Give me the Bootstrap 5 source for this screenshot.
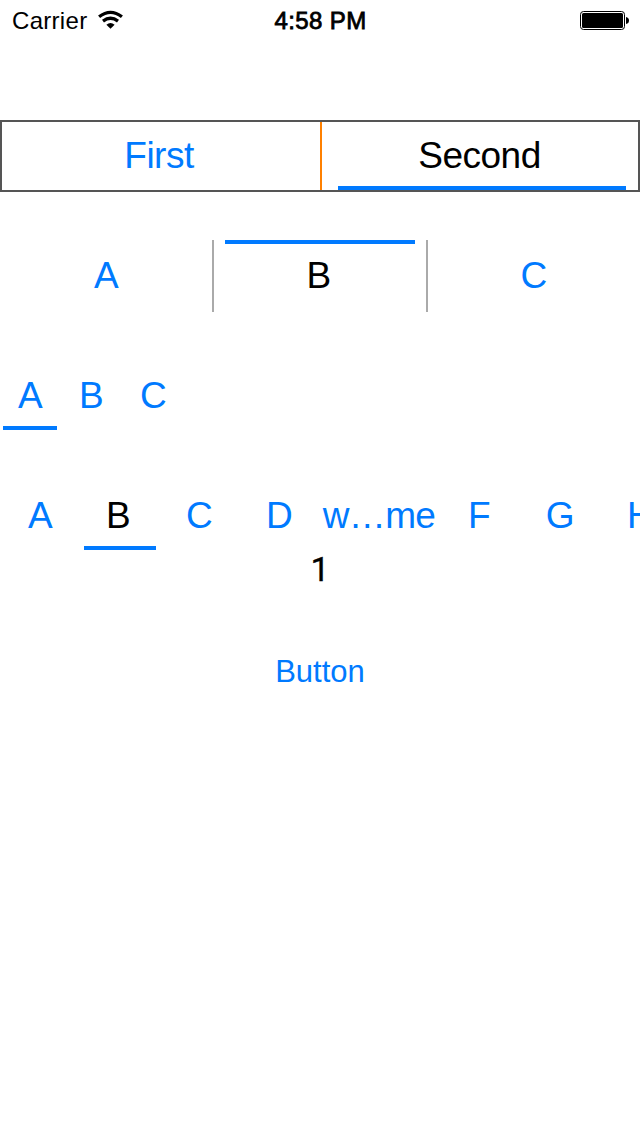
<!DOCTYPE html>
<html lang="en">
<head>
<meta charset="utf-8">
<meta name="viewport" content="width=device-width, initial-scale=1">
<title>Segments</title>
<link href="https://cdn.jsdelivr.net/npm/bootstrap@5.3.0/dist/css/bootstrap.min.css" rel="stylesheet">
<style>
:root { --tint: #007aff; }
body { font-family: "Liberation Sans", Arial, sans-serif; color: #000; background: #fff; width: 640px; height: 1136px; overflow: hidden; }
.status-bar { height: 40px; font-size: 24px; line-height: 38px; padding: 0 11px 0 12px; margin-bottom: 80px; }
.status-bar span { padding-top: 2px; }
.carrier { letter-spacing: .3px; }
.wifi { margin-left: 9px; }
.clock { -webkit-text-stroke: .8px #000; letter-spacing: .4px; }
.seg { height: 72px; margin-bottom: 48px; font-size: 37px; line-height: 71px; letter-spacing: -.5px; }
.seg-item { color: var(--tint); text-align: center; text-decoration: none; white-space: nowrap; position: relative; flex: none; height: 100%; }
.seg-item.selected { color: #000; }
.seg-item .bar { position: absolute; height: 4px; background: var(--tint); }
.seg-boxed { border: 2px solid #555; line-height: 67px; }
.seg-boxed .seg-item:first-child { width: 320px; border-right: 2px solid #ff8000; padding-right: 4px; }
.seg-boxed .seg-item:last-child { width: 316px; padding-right: 1px; }
.seg-boxed .bar { left: 16px; right: 12px; bottom: 0; }
.seg-thirds .seg-item { width: 214px; border-right: 2px solid #aaa; }
.seg-thirds .seg-item.selected { padding-right: 3px; }
.seg-thirds .seg-item:last-child { width: 212px; border: 0; padding-right: 1px; }
.seg-thirds .bar { left: 11px; width: 190px; top: 0; }
.seg-compact .seg-item { width: 61px; padding-right: 1px; }
.seg-compact .seg-item:last-child { padding: 0 0 0 1px; }
.seg-compact .bar { left: 3px; width: 54px; bottom: 2px; }
.seg-scroll { margin-bottom: 0; }
.seg-scroll .seg-item { width: 80px; padding-right: 2px; }
.seg-scroll .seg-item:first-child { padding-right: 0; }
.seg-scroll .selected { padding-right: 4px; }
.seg-scroll .seg-item.wide { width: 118px; padding-right: 0; letter-spacing: -.7px; }
.seg-scroll .wide ~ .seg-item { padding: 0 0 0 2px; }
.seg-scroll .wide ~ .seg-item + .seg-item { padding-left: 4px; }
.seg-scroll .bar { left: 4px; width: 72px; bottom: 2px; }
.counter { font-family: Roboto, "Liberation Sans", sans-serif; font-size: 34px; line-height: 34px; height: 34px; -webkit-text-stroke: .3px #000; }
.action { font-size: 31px; line-height: 36px; color: var(--tint); margin-top: 68px; }
</style>
</head>
<body>
<header class="status-bar d-flex align-items-center">
  <div class="col d-flex align-items-center">
    <span class="carrier">Carrier</span>
    <svg class="wifi" width="28" height="20" viewBox="0 0 28 20" fill="none" stroke="#000">
      <path d="M3.1 6.8Q14.5-2 25.9 6.8" stroke-width="3.3"/>
      <path d="M7 11.1Q14.5 5.4 22 11.1" stroke-width="3.3"/>
      <path d="M10.4 14.7Q14.5 11.2 18.6 14.7L14.5 18.7Z" fill="#000" stroke="none"/>
    </svg>
  </div>
  <span class="clock">4:58 PM</span>
  <div class="col d-flex justify-content-end">
    <svg width="49" height="20" viewBox="0 0 49 20">
      <rect x=".5" y="1.5" width="44" height="18" rx="3" fill="#fff" stroke="#000"/>
      <rect x="2" y="3" width="41" height="15" rx="1.5"/>
      <path d="M46 7q3 .5 3 3.5t-3 3.5z"/>
    </svg>
  </div>
</header>
<nav class="seg seg-boxed d-flex">
  <a class="seg-item">First</a>
  <a class="seg-item selected">Second<span class="bar"></span></a>
</nav>
<nav class="seg seg-thirds d-flex">
  <a class="seg-item">A</a>
  <a class="seg-item selected">B<span class="bar"></span></a>
  <a class="seg-item">C</a>
</nav>
<nav class="seg seg-compact d-flex">
  <a class="seg-item">A<span class="bar"></span></a>
  <a class="seg-item">B</a>
  <a class="seg-item">C</a>
</nav>
<nav class="seg seg-scroll d-flex overflow-hidden">
  <a class="seg-item">A</a>
  <a class="seg-item selected">B<span class="bar"></span></a>
  <a class="seg-item">C</a>
  <a class="seg-item">D</a>
  <a class="seg-item wide">w…me</a>
  <a class="seg-item">F</a>
  <a class="seg-item">G</a>
  <a class="seg-item">H</a>
</nav>
<main class="text-center">
  <div class="counter">1</div>
  <button type="button" class="btn action border-0 p-0">Button</button>
</main>
<script src="https://cdn.jsdelivr.net/npm/bootstrap@5.3.0/dist/js/bootstrap.bundle.min.js"></script>
</body>
</html>
